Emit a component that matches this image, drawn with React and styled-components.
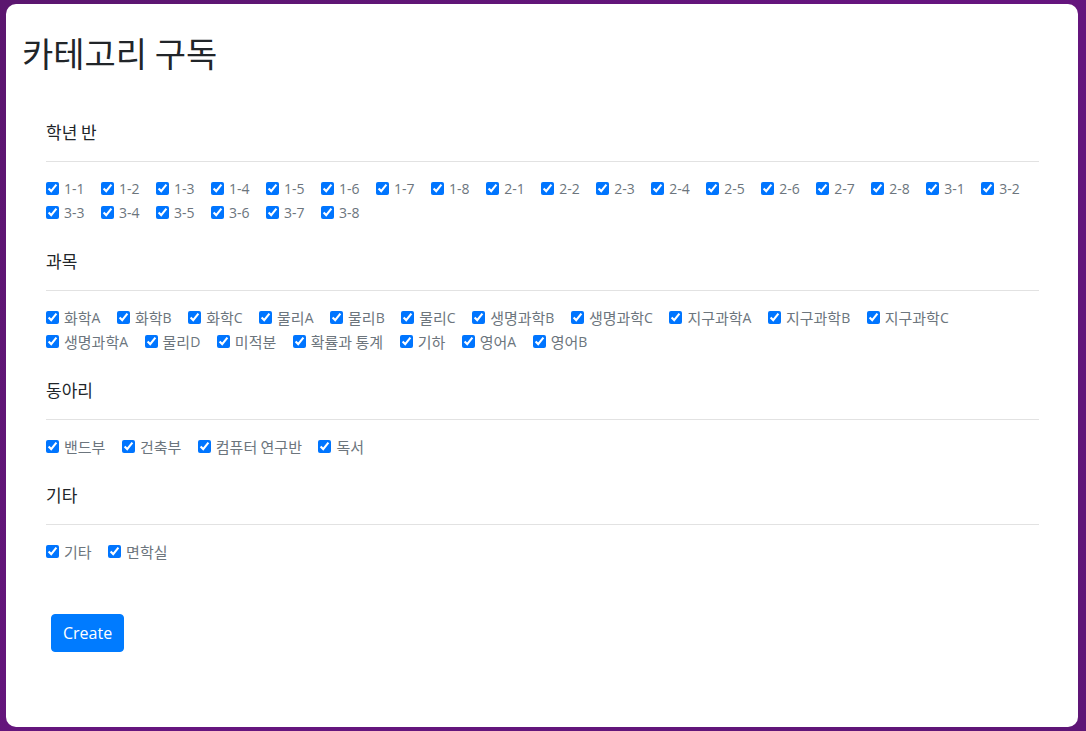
import React from "react";
import styled, { createGlobalStyle } from "styled-components";

const Global = createGlobalStyle`
  * { box-sizing: border-box; }
  html, body { margin: 0; padding: 0; }
  body {
    background: linear-gradient(135deg, #5b166f 0%, #66157f 50%, #5e1576 100%);
    font-family: "Open Sans", "Noto Sans CJK KR", sans-serif;
    padding: 4px 8px 4px 6px;
    min-height: 731px;
  }
`;

const Card = styled.div`
  background: #fff;
  border-radius: 10px;
  height: 723px;
  padding: 16px 16px;
`;

const Title = styled.h1`
  margin: 13px 0 0;
  font-family: "Noto Sans CJK KR", sans-serif;
  font-weight: 400;
  font-size: 34px;
  line-height: 40px;
  color: #212529;
`;

const Form = styled.form`
  padding: 47px 23px 0 24px;
`;

const Section = styled.section`
  margin-bottom: 24.5px;
`;

const SectionTitle = styled.div`
  font-family: "Noto Sans CJK KR", sans-serif;
  font-size: 17px;
  line-height: 24px;
  color: #212529;
`;

const Rule = styled.hr`
  margin: 16.5px 0 15px;
  border: 0;
  border-top: 1px solid #e2e2e2;
  height: 0;
`;

const Options = styled.div`
  display: flex;
  flex-wrap: wrap;
  column-gap: 16.5px;
`;

const Item = styled.label`
  display: inline-flex;
  align-items: center;
  height: 24px;
  font-size: 14px;
  color: #6c757d;
  white-space: pre;
  cursor: pointer;
`;

const Hangul = styled.span`
  font-family: "Noto Sans CJK KR", sans-serif;
  font-size: 15px;
  line-height: 1;
`;

const Check = styled.input.attrs({ type: "checkbox" })`
  width: 13px;
  height: 13px;
  margin: 0 5px 0 0;
  accent-color: #0075ff;
`;

const Button = styled.button`
  margin: 25.5px 0 0 5px;
  background: #007bff;
  color: #fff;
  border: 1px solid #007bff;
  border-radius: 4px;
  font-family: "Open Sans", sans-serif;
  font-size: 16px;
  line-height: 24px;
  padding: 6px 11px;
  cursor: pointer;
`;

const classes = [];
for (let g = 1; g <= 3; g++) for (let c = 1; c <= 8; c++) classes.push(`${g}-${c}`);

const sections = [
  { title: "학년 반", items: classes },
  {
    title: "과목",
    items: [
      "화학A", "화학B", "화학C", "물리A", "물리B", "물리C", "생명과학B", "생명과학C",
      "지구과학A", "지구과학B", "지구과학C", "생명과학A", "물리D", "미적분", "확률과 통계",
      "기하", "영어A", "영어B",
    ],
  },
  { title: "동아리", items: ["밴드부", "건축부", "컴퓨터 연구반", "독서"] },
  { title: "기타", items: ["기타", "면학실"] },
];

function LabelText({ text }) {
  const parts = text.split(/([\uAC00-\uD7A3\u3131-\u318E ]+)/).filter(Boolean);
  return parts.map((p, i) =>
    /[\uAC00-\uD7A3]/.test(p) ? <Hangul key={i}>{p}</Hangul> : <span key={i}>{p}</span>
  );
}

export default function App() {
  return (
    <>
      <Global />
      <Card>
        <Title>카테고리 구독</Title>
        <Form onSubmit={(e) => e.preventDefault()}>
          {sections.map((s) => (
            <Section key={s.title}>
              <SectionTitle>{s.title}</SectionTitle>
              <Rule />
              <Options>
                {s.items.map((it) => (
                  <Item key={it}>
                    <Check defaultChecked />
                    <LabelText text={it} />
                  </Item>
                ))}
              </Options>
            </Section>
          ))}
          <Button type="submit">Create</Button>
        </Form>
      </Card>
    </>
  );
}
